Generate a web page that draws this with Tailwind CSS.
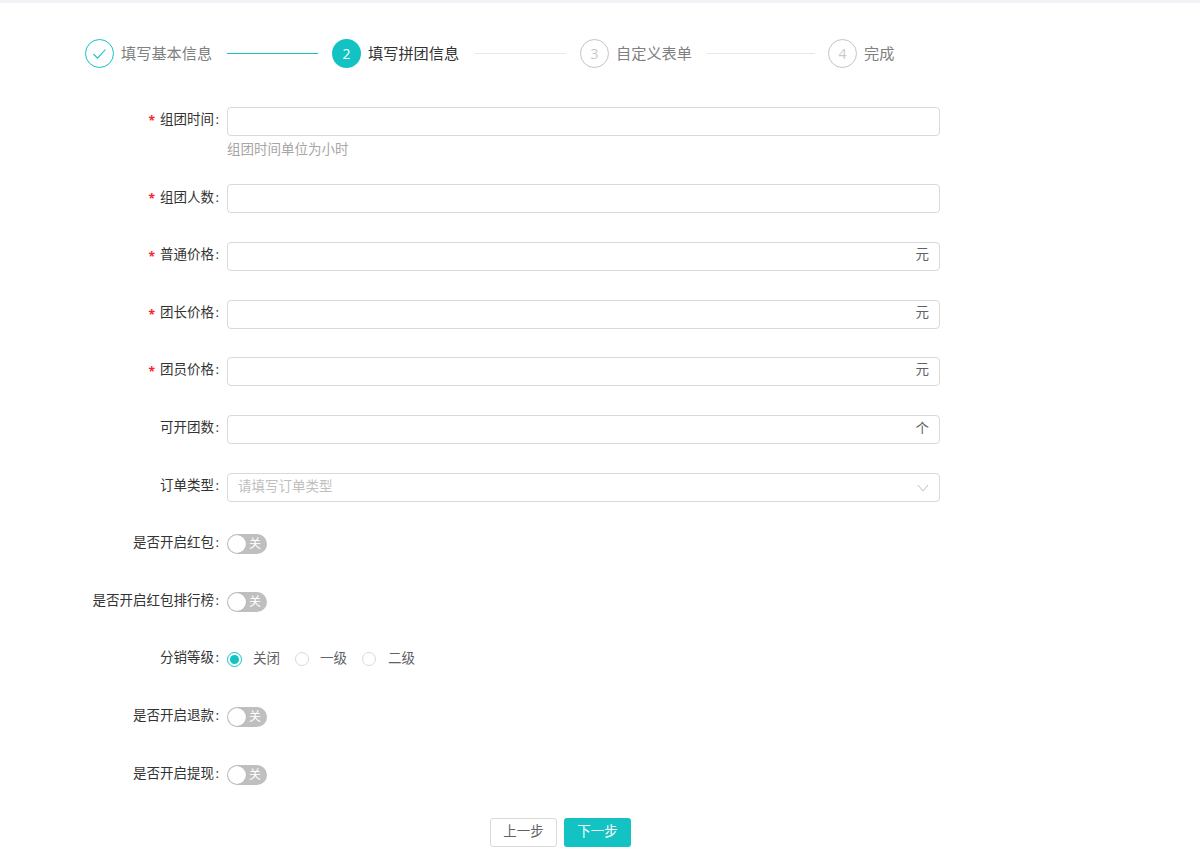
<!DOCTYPE html>
<html lang="zh-CN">
<head>
  <meta charset="UTF-8">
  <title>填写拼团信息</title>
  <script src="https://cdn.jsdelivr.net/npm/@tailwindcss/browser@4"></script>
</head>
<body class="bg-white h-[855px] overflow-hidden font-['Open_Sans','Noto_Sans_CJK_SC',sans-serif] text-[13.5px] text-[#606266]">
  <div class="h-[3px] bg-[#f0f2f5]"></div>

  <!-- steps -->
  <div class="flex items-center h-[29px] mt-[36px] ml-[85px] text-[15.2px]">
    <div class="w-[29px] h-[29px] rounded-full border border-[#13c2c2] flex items-center justify-center">
      <svg width="13" height="10" viewBox="0 0 13 10" fill="none" stroke="#13c2c2" stroke-width="1.1"><path d="M0.5 5 L4.5 9.2 L12.5 0.5"/></svg>
    </div>
    <span class="ml-[7px] w-[91px] whitespace-nowrap text-[#808080]">填写基本信息</span>
    <div class="ml-[15px] w-[91px] h-px bg-[#13c2c2]"></div>

    <div class="ml-[14px] w-[29px] h-[29px] rounded-full bg-[#13c2c2] text-white text-sm flex items-center justify-center">2</div>
    <span class="ml-[7px] w-[92px] whitespace-nowrap text-[#333]">填写拼团信息</span>
    <div class="ml-[15px] w-[91px] h-px bg-[#e8e8e8]"></div>

    <div class="ml-[14px] w-[29px] h-[29px] rounded-full border border-[#c4c4c4] text-[#c8c8c8] text-sm flex items-center justify-center">3</div>
    <span class="ml-[7px] w-[76px] whitespace-nowrap text-[#808080]">自定义表单</span>
    <div class="ml-[15px] w-[108px] h-px bg-[#e8e8e8]"></div>

    <div class="ml-[13px] w-[29px] h-[29px] rounded-full border border-[#c4c4c4] text-[#c8c8c8] text-sm flex items-center justify-center">4</div>
    <span class="ml-[7px] whitespace-nowrap text-[#808080]">完成</span>
  </div>

  <!-- form -->
  <form class="mt-[39px] ml-[80px] w-[860px]">
    <div class="flex items-start h-[77px]">
      <label class="w-[147px] h-[24px] pr-2 flex items-center justify-end whitespace-nowrap text-[#333]"><span class="text-[#f5222d] text-xs font-bold mr-[5px] pt-[4px]">*</span>组团时间<span class="ml-[1.5px]">:</span></label>
      <div class="flex-1">
        <div class="h-[29px] border border-[#d9d9d9] rounded-[4px]"></div>
        <p class="mt-[4px] text-[#a6a6a6] leading-[19px]">组团时间单位为小时</p>
      </div>
    </div>

    <div class="flex items-start h-[58px]">
      <label class="w-[147px] h-[26px] pr-2 flex items-center justify-end whitespace-nowrap text-[#333]"><span class="text-[#f5222d] text-xs font-bold mr-[5px] pt-[4px]">*</span>组团人数<span class="ml-[1.5px]">:</span></label>
      <div class="flex-1 h-[29px] border border-[#d9d9d9] rounded-[4px]"></div>
    </div>

    <div class="flex items-start h-[58px]">
      <label class="w-[147px] h-[25px] pr-2 flex items-center justify-end whitespace-nowrap text-[#333]"><span class="text-[#f5222d] text-xs font-bold mr-[5px] pt-[4px]">*</span>普通价格<span class="ml-[1.5px]">:</span></label>
      <div class="flex-1 h-[29px] border border-[#d9d9d9] rounded-[4px] flex items-center justify-end pr-[10px] pb-[4px]">元</div>
    </div>

    <div class="flex items-start h-[57px]">
      <label class="w-[147px] h-[25px] pr-2 flex items-center justify-end whitespace-nowrap text-[#333]"><span class="text-[#f5222d] text-xs font-bold mr-[5px] pt-[4px]">*</span>团长价格<span class="ml-[1.5px]">:</span></label>
      <div class="flex-1 h-[29px] border border-[#d9d9d9] rounded-[4px] flex items-center justify-end pr-[10px] pb-[4px]">元</div>
    </div>

    <div class="flex items-start h-[58px]">
      <label class="w-[147px] h-[25px] pr-2 flex items-center justify-end whitespace-nowrap text-[#333]"><span class="text-[#f5222d] text-xs font-bold mr-[5px] pt-[4px]">*</span>团员价格<span class="ml-[1.5px]">:</span></label>
      <div class="flex-1 h-[29px] border border-[#d9d9d9] rounded-[4px] flex items-center justify-end pr-[10px] pb-[4px]">元</div>
    </div>

    <div class="flex items-start h-[58px]">
      <label class="w-[147px] h-[24px] pr-2 flex items-center justify-end whitespace-nowrap text-[#333]">可开团数<span class="ml-[1.5px]">:</span></label>
      <div class="flex-1 h-[29px] border border-[#d9d9d9] rounded-[4px] flex items-center justify-end pr-[10px] pb-[2px]">个</div>
    </div>

    <div class="flex items-start h-[58px]">
      <label class="w-[147px] h-[24px] pr-2 flex items-center justify-end whitespace-nowrap text-[#333]">订单类型<span class="ml-[1.5px]">:</span></label>
      <div class="flex-1 h-[29px] border border-[#d9d9d9] rounded-[4px] flex items-center justify-between pl-[10px] pr-[10px] text-[#bfbfbf]">
        <span class="pb-[2px]">请填写订单类型</span>
        <svg width="12" height="8" viewBox="0 0 12 8" fill="none" stroke="#bfbfbf" stroke-width="1"><path d="M1 1 L6 7 L11 1"/></svg>
      </div>
    </div>

    <div class="flex items-center h-[58px] -mt-[16px]">
      <label class="w-[147px] pr-2 pb-[3px] text-right whitespace-nowrap text-[#333]">是否开启红包<span class="ml-[1.5px]">:</span></label>
      <div class="w-10 h-5 rounded-full bg-[#bfbfbf] relative flex items-center justify-end pr-[6px] text-xs text-white">关<span class="absolute left-[1px] top-[1px] w-[18px] h-[18px] rounded-full bg-white shadow-[0_0_1px_rgba(0,0,0,0.2)]"></span></div>
    </div>

    <div class="flex items-center h-[57px]">
      <label class="w-[147px] pr-2 pb-[3px] text-right whitespace-nowrap text-[#333]">是否开启红包排行榜<span class="ml-[1.5px]">:</span></label>
      <div class="w-10 h-5 rounded-full bg-[#bfbfbf] relative flex items-center justify-end pr-[6px] text-xs text-white">关<span class="absolute left-[1px] top-[1px] w-[18px] h-[18px] rounded-full bg-white shadow-[0_0_1px_rgba(0,0,0,0.2)]"></span></div>
    </div>

    <div class="flex items-center h-[57.5px]">
      <label class="w-[147px] pr-2 pb-[3px] text-right whitespace-nowrap text-[#333]">分销等级<span class="ml-[1.5px]">:</span></label>
      <div class="flex items-center pt-[1px]">
        <span class="w-[15px] h-[15px] rounded-full border border-[#13c2c2] flex items-center justify-center"><span class="w-[9px] h-[9px] rounded-full bg-[#13c2c2]"></span></span>
        <span class="ml-[11px] pb-[3px]">关闭</span>
        <span class="ml-[15px] w-[14px] h-[14px] rounded-full border border-[#d9d9d9]"></span>
        <span class="ml-[11px] pb-[3px]">一级</span>
        <span class="ml-[15px] w-[14px] h-[14px] rounded-full border border-[#d9d9d9]"></span>
        <span class="ml-[12px] pb-[3px]">二级</span>
      </div>
    </div>

    <div class="flex items-center h-[58px]">
      <label class="w-[147px] pr-2 pb-[3px] text-right whitespace-nowrap text-[#333]">是否开启退款<span class="ml-[1.5px]">:</span></label>
      <div class="w-10 h-5 rounded-full bg-[#bfbfbf] relative flex items-center justify-end pr-[6px] text-xs text-white">关<span class="absolute left-[1px] top-[1px] w-[18px] h-[18px] rounded-full bg-white shadow-[0_0_1px_rgba(0,0,0,0.2)]"></span></div>
    </div>

    <div class="flex items-center h-[58px]">
      <label class="w-[147px] pr-2 pb-[3px] text-right whitespace-nowrap text-[#333]">是否开启提现<span class="ml-[1.5px]">:</span></label>
      <div class="w-10 h-5 rounded-full bg-[#bfbfbf] relative flex items-center justify-end pr-[6px] text-xs text-white">关<span class="absolute left-[1px] top-[1px] w-[18px] h-[18px] rounded-full bg-white shadow-[0_0_1px_rgba(0,0,0,0.2)]"></span></div>
    </div>

    <div class="flex justify-center gap-[7px] mt-[14px] ml-[-80px] w-[1121px]">
      <button type="button" class="w-[67px] h-[29px] border border-[#d9d9d9] rounded-[3px] text-[#606266] pb-[2px]">上一步</button>
      <button type="button" class="w-[67px] h-[29px] rounded-[3px] bg-[#13c2c2] text-white pb-[2px]">下一步</button>
    </div>
  </form>
</body>
</html>
